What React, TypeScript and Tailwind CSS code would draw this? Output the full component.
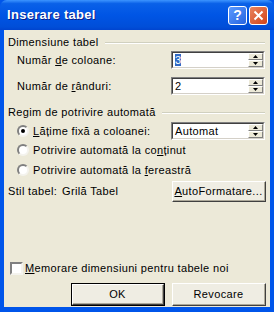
import React from "react";

const font = "font-['Tahoma','Liberation_Sans',sans-serif]";

function Arrow({ up }: { up?: boolean }) {
  return (
    <div className="flex h-[7px] w-[15px] items-center justify-center border border-t-white border-l-white border-b-[#808080] border-r-[#808080] bg-[#ece9d8]">
      <svg width="5" height="3" viewBox="0 0 5 3">
        {up ? <polygon points="2.5,0 5,3 0,3" fill="#000" /> : <polygon points="0,0 5,0 2.5,3" fill="#000" />}
      </svg>
    </div>
  );
}

function Spin({ value, selected }: { value: string; selected?: boolean }) {
  return (
    <div className="flex h-[18px] w-[94px] border border-t-[#808080] border-l-[#808080] border-b-white border-r-white">
      <div className="flex flex-1 items-stretch border border-t-[#404040] border-l-[#404040] border-b-[#d4d0c8] border-r-[#d4d0c8] bg-white">
        <div className="flex-1 pl-[2px] text-[11px] leading-[14px] text-black">
          <span className={selected ? "bg-[#316ac5] text-white" : ""}>{value}</span>
        </div>
        <div className="flex flex-col justify-center">
          <Arrow up />
          <Arrow />
        </div>
      </div>
    </div>
  );
}

function Radio({ checked }: { checked?: boolean }) {
  return (
    <div className="flex h-[12px] w-[12px] items-center justify-center rounded-full border-2 border-t-[#808080] border-l-[#808080] border-b-[#f4f3ee] border-r-[#f4f3ee] bg-white">
      {checked && <div className="h-[4px] w-[4px] rounded-full bg-black" />}
    </div>
  );
}

function Button({ children, def }: { children: React.ReactNode; def?: boolean }) {
  return (
    <div className={"h-full w-[94px] " + (def ? "border border-black" : "")}>
      <div className="flex h-full w-full items-center justify-center border border-t-white border-l-white border-b-[#404040] border-r-[#404040] bg-[#efede3]">
        <div className="flex h-full w-full items-center justify-center border-b border-r border-b-[#aca899] border-r-[#aca899] text-[11px] text-black">
          {children}
        </div>
      </div>
    </div>
  );
}

function Header({ text }: { text: string }) {
  return (
    <div className="flex h-[13px] items-center pl-[4px] pr-[5px]">
      <span className="whitespace-nowrap text-[11px] leading-[13px] text-black">{text}</span>
      <div className="ml-[6px] flex-1 border-t border-b border-t-[#d0d0bf] border-b-white" />
    </div>
  );
}

export default function App() {
  return (
    <div className={"flex h-[312px] w-[274px] flex-col bg-[#0055ea] " + font}>
      <div className="flex h-[30px] items-center rounded-t-[7px] bg-[linear-gradient(#3d95ff_0%,#0a61e8_12%,#0055e5_50%,#004ed8_90%,#0044cf_100%)] px-[7px]">
        <span className="text-[13px] font-bold tracking-[0.3px] text-white [text-shadow:1px_1px_0_#0a1e8c]">Inserare tabel</span>
        <div className="ml-auto mr-[-1px] flex gap-[2px]">
          <div className="flex h-[19px] w-[19px] items-center justify-center rounded-[3px] border border-white bg-[linear-gradient(135deg,#5b9bff,#2663e0)] text-[14px] font-bold leading-none text-white">?</div>
          <div className="flex h-[19px] w-[19px] items-center justify-center rounded-[3px] border border-white bg-[linear-gradient(135deg,#e9845f,#d2441a)]">
            <svg width="11" height="11" viewBox="0 0 11 11">
              <path d="M1.5 1.5 L9.5 9.5 M9.5 1.5 L1.5 9.5" stroke="#fff" strokeWidth="2" />
            </svg>
          </div>
        </div>
      </div>
      <div className="mx-[4px] mb-[5px] flex flex-1 flex-col bg-[#ece9d8] pt-[6px] text-[11px] tracking-[0.35px] text-black">
        <Header text="Dimensiune tabel" />
        <div className="mt-[2px] flex h-[18px] items-center pl-[13px] pr-[5px]">
          <span>Număr <u>d</u>e coloane:</span>
          <div className="ml-auto"><Spin value="3" selected /></div>
        </div>
        <div className="mt-[8px] flex h-[18px] items-center pl-[13px] pr-[5px]">
          <span>Număr de <u>r</u>ânduri:</span>
          <div className="ml-auto"><Spin value="2" /></div>
        </div>
        <div className="mt-[11px]">
          <Header text="Regim de potrivire automată" />
        </div>
        <div className="mt-[3px] flex h-[18px] items-center pl-[13px] pr-[5px]">
          <Radio checked />
          <span className="ml-[4px]"><u>L</u>ățime fixă a coloanei:</span>
          <div className="ml-auto"><Spin value="Automat" /></div>
        </div>
        <div className="mt-[1px] flex h-[18px] items-center pl-[13px]">
          <Radio />
          <span className="ml-[4px]">Potrivire automată la co<u>n</u>ținut</span>
        </div>
        <div className="mt-[2px] flex h-[18px] items-center pl-[13px]">
          <Radio />
          <span className="ml-[4px]">Potrivire automată la <u>f</u>ereastră</span>
        </div>
        <div className="mt-[2px] flex h-[21px] items-center pl-[4px] pr-[4px]">
          <span className="w-[54px]">Stil tabel:</span>
          <span>Grilă Tabel</span>
          <div className="ml-auto h-full"><Button><u>A</u>utoFormatare...</Button></div>
        </div>
        <div className="mt-[60px] flex h-[13px] items-center pl-[6px]">
          <div className="h-[13px] w-[13px] border-2 border-t-[#808080] border-l-[#808080] border-b-[#f4f3ee] border-r-[#f4f3ee] bg-white" />
          <span className="ml-[2px]"><u>M</u>emorare dimensiuni pentru tabele noi</span>
        </div>
        <div className="mt-[8px] flex h-[23px] justify-end gap-[7px] pr-[4px]">
          <Button def>OK</Button>
          <Button>Revocare</Button>
        </div>
      </div>
    </div>
  );
}
